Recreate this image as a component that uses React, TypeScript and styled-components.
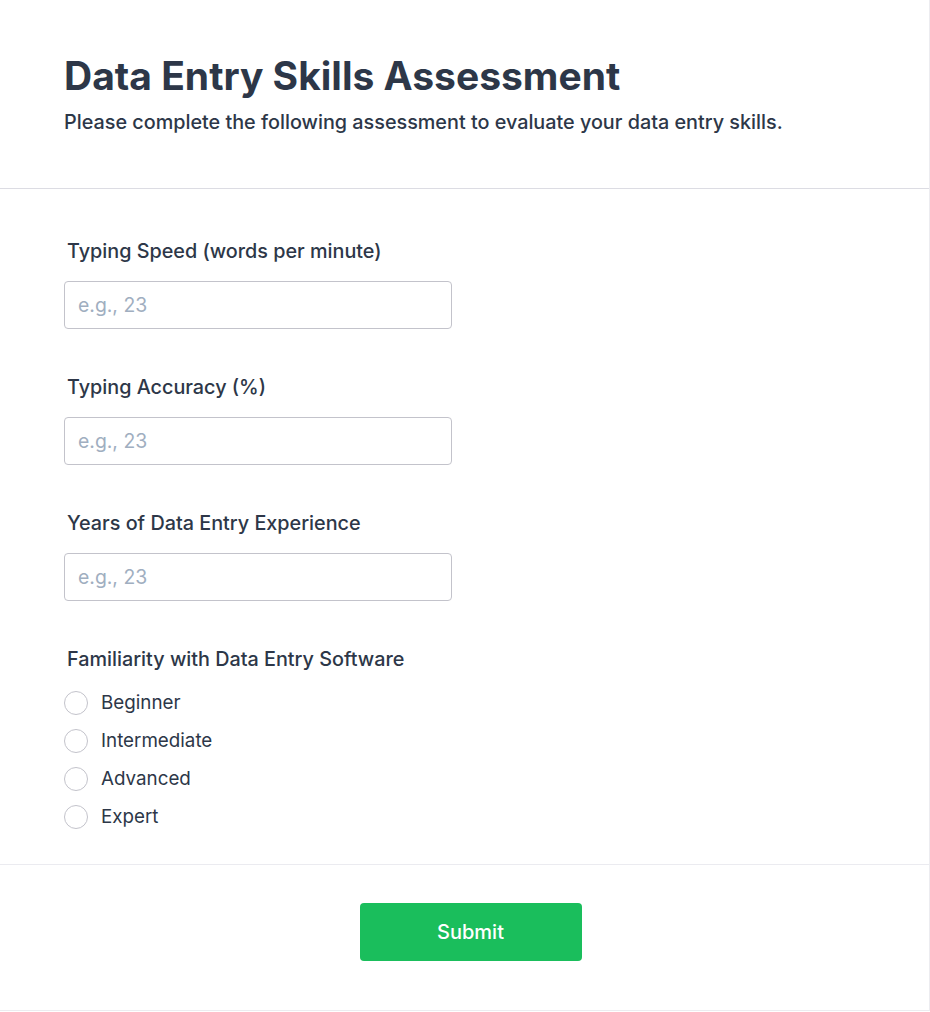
import styled, { createGlobalStyle } from 'styled-components';

const GlobalStyle = createGlobalStyle`
  body {
    margin: 0;
    background: #ffffff;
    font-family: Inter, 'Noto Sans', sans-serif;
    color: #2d3748;
  }
`;

const Card = styled.div`
  width: 930px;
  box-sizing: border-box;
  border-right: 1px solid #ececf0;
  border-bottom: 1px solid #ececf0;
  background: #ffffff;
`;

const Header = styled.header`
  padding: 54px 64px 52px;
  border-bottom: 1px solid #dcdce3;
`;

const Title = styled.h1`
  margin: 0;
  font-size: 39px;
  line-height: 44px;
  font-weight: 700;
  color: #2d3748;
`;

const Subtitle = styled.p`
  margin: 11px 0 0;
  font-size: 19.8px;
  line-height: 27px;
  font-weight: 500;
  color: #2d3748;
`;

const Form = styled.form`
  display: flex;
  flex-direction: column;
  gap: 45px;
  padding: 49px 64px 35px;
  border-bottom: 1px solid #ebebf0;
`;

const Field = styled.div<{ $gap?: number }>`
  display: flex;
  flex-direction: column;
  gap: ${({ $gap }) => $gap ?? 16}px;
`;

const Label = styled.label`
  padding-left: 3px;
  font-size: 19.8px;
  line-height: 27px;
  font-weight: 500;
  color: #2d3748;
`;

const Input = styled.input`
  width: 388px;
  height: 48px;
  box-sizing: border-box;
  padding: 0 13px;
  border: 1px solid #c3c3cb;
  border-radius: 4px;
  font-family: Inter, sans-serif;
  font-size: 19.4px;
  color: #2d3748;
  outline: none;
  &::placeholder {
    color: #a0aec0;
  }
`;

const RadioList = styled.div`
  display: flex;
  flex-direction: column;
  gap: 14px;
`;

const RadioRow = styled.label`
  display: flex;
  align-items: center;
  gap: 13px;
  font-size: 18.8px;
  line-height: 24px;
  color: #2d3748;
`;

const RadioCircle = styled.span`
  width: 24px;
  height: 24px;
  box-sizing: border-box;
  border: 1px solid #c3c3cb;
  border-radius: 50%;
  background: #ffffff;
`;

const Footer = styled.footer`
  display: flex;
  justify-content: center;
  padding: 38px 0 49px 12px;
`;

const SubmitButton = styled.button`
  width: 222px;
  height: 58px;
  border: none;
  border-radius: 4px;
  background: #1abe5c;
  color: #ffffff;
  font-family: Inter, sans-serif;
  font-size: 20px;
  font-weight: 500;
  cursor: pointer;
`;

const fields = ['Typing Speed (words per minute)', 'Typing Accuracy (%)', 'Years of Data Entry Experience'];
const levels = ['Beginner', 'Intermediate', 'Advanced', 'Expert'];

export default function App() {
  return (
    <>
      <GlobalStyle />
      <Card>
        <Header>
          <Title>Data Entry Skills Assessment</Title>
          <Subtitle>Please complete the following assessment to evaluate your data entry skills.</Subtitle>
        </Header>
        <Form onSubmit={(e) => e.preventDefault()}>
          {fields.map((f) => (
            <Field key={f}>
              <Label>{f}</Label>
              <Input type="number" placeholder="e.g., 23" />
            </Field>
          ))}
          <Field $gap={18}>
            <Label>Familiarity with Data Entry Software</Label>
            <RadioList>
              {levels.map((l) => (
                <RadioRow key={l}>
                  <RadioCircle />
                  {l}
                </RadioRow>
              ))}
            </RadioList>
          </Field>
        </Form>
        <Footer>
          <SubmitButton type="button">Submit</SubmitButton>
        </Footer>
      </Card>
    </>
  );
}
